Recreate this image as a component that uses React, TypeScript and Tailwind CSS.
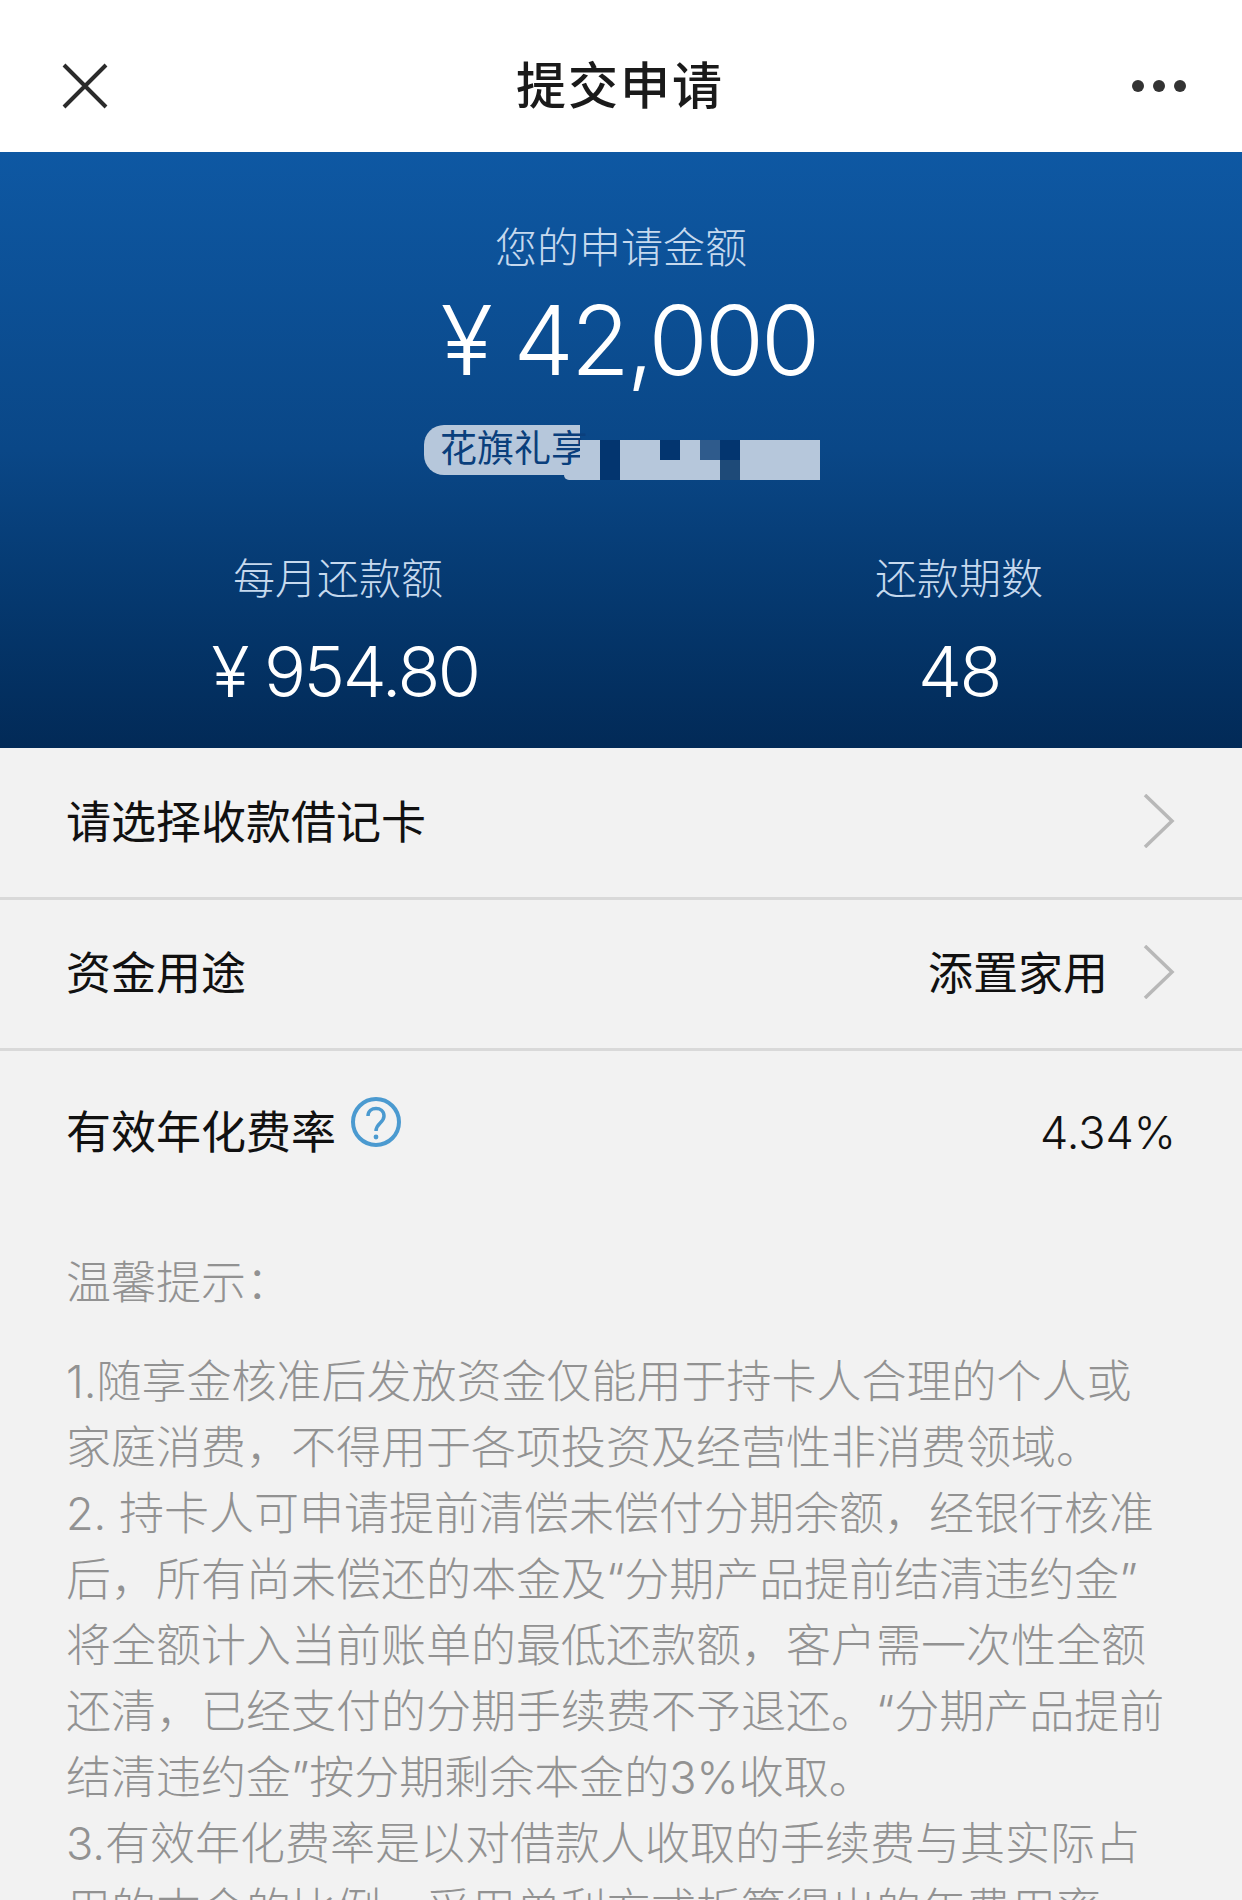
const cjk = { fontFamily: '"Inter", "Noto Sans CJK SC", sans-serif' };

const lines = [
  '1.随享金核准后发放资金仅能用于持卡人合理的个人或',
  '家庭消费，不得用于各项投资及经营性非消费领域。',
  '2. 持卡人可申请提前清偿未偿付分期余额，经银行核准',
  '后，所有尚未偿还的本金及“分期产品提前结清违约金”',
  '将全额计入当前账单的最低还款额，客户需一次性全额',
  '还清，已经支付的分期手续费不予退还。“分期产品提前',
  '结清违约金”按分期剩余本金的3%收取。',
  '3.有效年化费率是以对借款人收取的手续费与其实际占',
  '用的本金的比例，采用单利方式折算得出的年费用率',
];

const L = 'bg-[#b6c7db]';
const mosaicTop = [L, 'bg-[#03356f]', L, L, 'bg-[#03356f]', L, 'bg-[#2f5b8c]', 'bg-[#03356f]', L, L, L, L];
const mosaicBottom = [L, 'bg-[#03356f]', L, L, L, L, L, 'bg-[#1e4a78]', L, L, L, L];

function Chevron() {
  return (
    <svg width="32" height="54" viewBox="0 0 32 54" fill="none" className="shrink-0 mb-[4px]">
      <path d="M2 1 L29 27 L2 53" stroke="#b8b8b8" strokeWidth="3.5" />
    </svg>
  );
}

export default function App() {
  return (
    <div className="w-[1242px] h-[1900px] overflow-hidden bg-[#f2f2f2] text-[45px] text-[#111111]" style={cjk}>
      <header className="h-[152px] bg-white flex items-center justify-between pl-[62px] pr-[56px] pt-[20px]">
        <svg width="46" height="46" viewBox="0 0 46 46" fill="none">
          <path d="M2 2 L44 44 M44 2 L2 44" stroke="#2b2b2b" strokeWidth="4" />
        </svg>
        <h1 className="text-[50px] font-medium leading-none text-[#1a1a1a] tracking-[2px]">提交申请</h1>
        <div className="flex gap-[9px]">
          <span className="w-[12px] h-[12px] rounded-full bg-[#333333]" />
          <span className="w-[12px] h-[12px] rounded-full bg-[#333333]" />
          <span className="w-[12px] h-[12px] rounded-full bg-[#333333]" />
        </div>
      </header>

      <section className="h-[596px] bg-gradient-to-b from-[#0e58a3] via-[#0a4787] via-50% to-[#022a57] flex flex-col items-center pt-[70px]">
        <div className="text-[42px] leading-[52px] font-light text-[#c6d9ee]">您的申请金额</div>
        <div className="mt-[11px] ml-[16px] text-[96px] leading-[110px] font-light text-white tracking-[-3px]">¥ 42,000</div>
        <div className="mt-[30px] h-[56px] flex items-start self-start ml-[424px] relative">
          <div className="w-[156px] h-[50px] bg-[#b6c7db] rounded-l-[20px] pl-[16px] text-[37px] leading-[48px] text-[#0a3f7c] whitespace-nowrap">
            花旗礼享
          </div>
          <div className="absolute left-[156px] top-[15px] w-[240px] h-[40px] grid grid-cols-12 grid-rows-2">
            {mosaicTop.map((c, i) => <div key={`t${i}`} className={c} />)}
            {mosaicBottom.map((c, i) => <div key={`b${i}`} className={c} />)}
          </div>
          <div className="absolute left-[140px] top-[50px] w-[16px] h-[5px] bg-[#b6c7db] rounded-bl-[10px]" />
        </div>
        <div className="w-full flex mt-[72px] text-center">
          <div className="w-[680px]">
            <div className="text-[42px] leading-[52px] font-light text-[#c6d9ee] mr-[4px]">每月还款额</div>
            <div className="mt-[27px] text-[70px] leading-[80px] font-light text-white ml-[10px] tracking-[-2.5px]">¥ 954.80</div>
          </div>
          <div className="w-[562px] pr-[4px]">
            <div className="text-[42px] leading-[52px] font-light text-[#c6d9ee]">还款期数</div>
            <div className="mt-[27px] text-[70px] leading-[80px] font-light text-white tracking-[-2.5px]">48</div>
          </div>
        </div>
      </section>

      <div className="h-[152px] flex items-center justify-between pl-[66px] pr-[67px] border-b-[3px] border-[#d9d9d9]">
        <span>请选择收款借记卡</span>
        <Chevron />
      </div>
      <div className="h-[151px] flex items-center justify-between pl-[66px] pr-[67px] border-b-[3px] border-[#d9d9d9]">
        <span>资金用途</span>
        <div className="flex items-center gap-[35px]">
          <span>添置家用</span>
          <Chevron />
        </div>
      </div>

      <div className="h-[164px] flex items-center justify-between pl-[66px] pr-[66px]">
        <div className="flex items-center">
          <span>有效年化费率</span>
          <svg width="52" height="52" viewBox="0 0 52 52" fill="none" className="ml-[14px] mb-[22px]">
            <circle cx="26" cy="26" r="23" stroke="#4b9ad0" strokeWidth="4" />
            <path d="M18 20 C18 10 34 10 34 20 C34 27 26 27 26 35" stroke="#4b9ad0" strokeWidth="3.5" fill="none" />
            <circle cx="26" cy="41" r="2.4" fill="#4b9ad0" />
          </svg>
        </div>
        <span className="font-light">4.34%</span>
      </div>

      <div className="px-[66px] pt-[35px] text-[#929292] font-light whitespace-nowrap">
        <p className="leading-[66px] mb-[33px]">温馨提示：</p>
        {lines.map((t) => <p key={t} className="leading-[66px]">{t}</p>)}
      </div>
    </div>
  );
}
